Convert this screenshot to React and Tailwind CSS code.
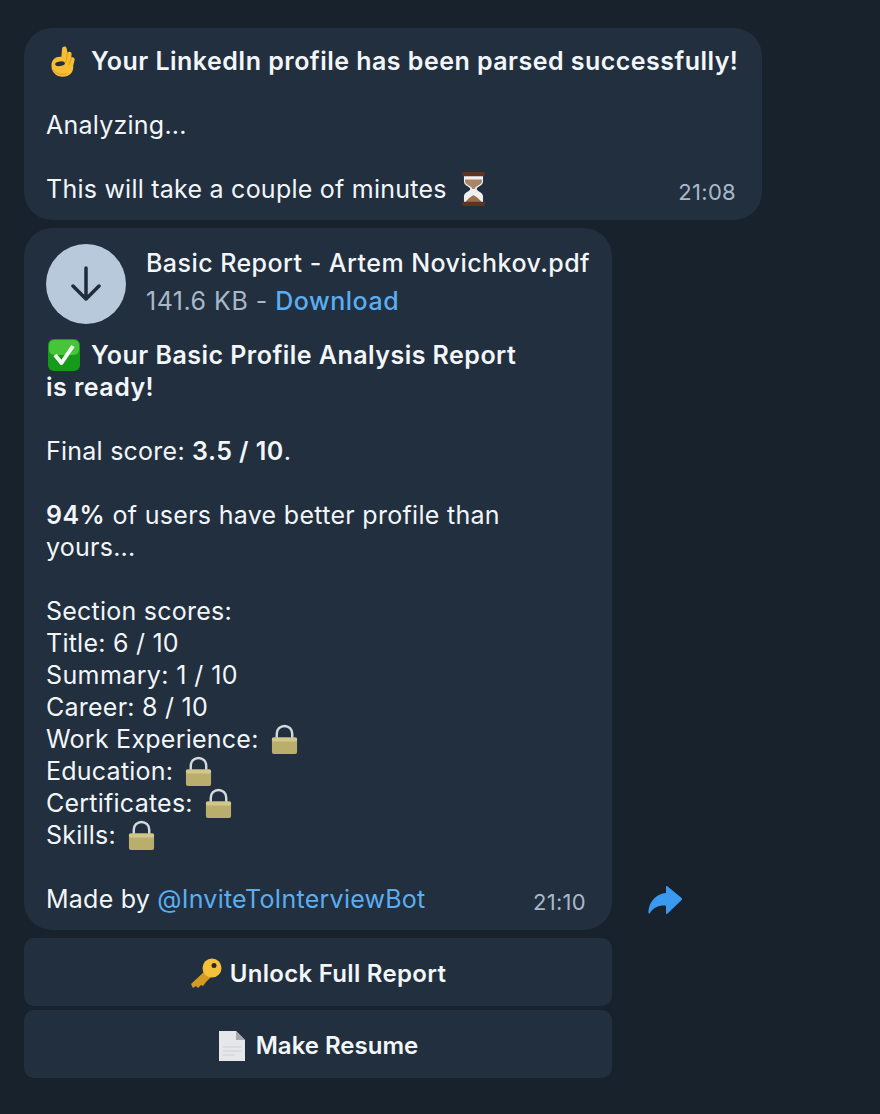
import React from "react";

const Ok = () => (
    <svg viewBox="0 0 84 100" className="w-[28px] h-[33px] ml-1 shrink-0">
        <path d="M4 62C4 44 18 34 34 36l2-24C37 3 48 2 50 10l3 14c2-6 12-5 12 3l-1 11c4-3 12 0 10 8l-4 16c2 22-12 34-32 34C18 96 4 82 4 62z" fill="#f7bd33" />
        <path d="M52 26l-4 26M65 38l-8 22" stroke="#d9921a" strokeWidth="2.500" fill="none" strokeLinecap="round" />
        <ellipse cx="30" cy="57" rx="15" ry="7" transform="rotate(-8 30 57)" fill="#26313c" />
        <path d="M10 76c8 12 26 16 42 10" stroke="#e09a1e" strokeWidth="3" fill="none" />
    </svg>
);

const Hourglass = () => (
    <svg viewBox="0 0 24 34" className="w-[27px] h-[36px] shrink-0">
        <path d="M3 3h18v7c0 4-6 5-6 7s6 3 6 7v7H3v-7c0-4 6-5 6-7s-6-3-6-7z" fill="#eef0f2" />
        <path d="M4 8h16v2c0 3-6 4-7 7h-2c-1-3-7-4-7-7z" fill="#a98465" />
        <path d="M4 31c0-3 6-7 8-8 2 1 8 5 8 8z" fill="#9a6f49" />
        <rect x="1" y="1" width="22" height="4" rx="2" fill="#5a3524" />
        <rect x="1" y="29" width="22" height="4" rx="2" fill="#5a3524" />
    </svg>
);

const Check = () => (
    <svg viewBox="0 0 34 34" className="w-[34px] h-[34px] ml-[1px] shrink-0">
        <rect x="1" y="1" width="32" height="32" rx="6" fill="#159a1a" />
        <rect x="2" y="2" width="30" height="15" rx="5" fill="#46c43a" />
        <path d="M8 17l6.500 8L26 8" stroke="#f4f7f4" strokeWidth="4" fill="none" strokeLinejoin="round" />
    </svg>
);

const Lock = () => (
    <svg viewBox="0 0 30 32" className="w-[29px] h-[31px] shrink-0">
        <path d="M7 15V10c0-4.500 3.500-8 8-8s8 3.500 8 8v5" stroke="#d5d9de" strokeWidth="2.500" fill="none" />
        <rect x="2" y="14" width="26" height="17" rx="2" fill="#b9ae6c" />
        <rect x="2" y="14" width="26" height="4" rx="1.500" fill="#d2c78a" />
    </svg>
);

const Key = () => (
    <svg viewBox="0 0 32 32" className="w-[32px] h-[32px] shrink-0">
        <path d="M16 12L1 26l2 4 3-2 2 2 3-3 2 1 3-4 6-6z" fill="#d69a22" />
        <circle cx="22" cy="10" r="9.500" fill="#f5c03a" />
        <circle cx="24" cy="7.500" r="2.500" fill="#2b2a22" />
    </svg>
);

const Page = () => (
    <svg viewBox="0 0 28 32" className="w-[28px] h-[32px] shrink-0">
        <path d="M1 1h17l9 9v21H1z" fill="#e6e7e9" />
        <path d="M18 1l9 9h-9z" fill="#a7a9ac" />
        <path d="M5 17h18M5 21h18M5 25h12" stroke="#d6d8da" strokeWidth="1.500" />
    </svg>
);

const ReportLine = ({ children }) => <p className="flex items-center gap-[11px] h-8">{children}</p>;

const App = () => {
    return (
        <div className="w-[880px] h-[1114px] bg-[#18222c] pt-7 px-6 text-[25px] leading-8 tracking-[0.24px] text-[#f3f6f9] font-['Inter','Liberation_Sans',sans-serif] overflow-hidden">
            {/* First message */}
            <div className="w-[738px] h-[192px] rounded-[28px] bg-[#212f3f] pl-[22px] pr-[26px] pt-[17px]">
                <p className="flex items-center gap-[13px] h-8 whitespace-nowrap font-semibold tracking-[0.47px]">
                    <Ok />
                    Your LinkedIn profile has been parsed successfully!
                </p>
                <p className="mt-8">Analyzing...</p>
                <div className="mt-8 flex items-center justify-between h-8">
                    <p className="flex items-center gap-[13px]">
                        This will take a couple of minutes
                        <Hourglass />
                    </p>
                    <span className="text-[22px] tracking-[0.3px] text-[#a9b8c8] translate-y-[3px]">21:08</span>
                </div>
            </div>

            {/* Report message */}
            <div className="mt-2 flex items-end">
                <div className="w-[588px] h-[702px] rounded-[28px] bg-[#212f3f] pl-[22px] pr-[26px] pt-4">
                    <div className="flex items-center gap-5">
                        <div className="w-20 h-20 shrink-0 rounded-full bg-[#b8c9dc] flex items-center justify-center">
                            <svg viewBox="0 0 30 36" className="w-[30px] h-9" fill="none" stroke="#1e2c3c" strokeWidth="3.500" strokeLinecap="round" strokeLinejoin="round">
                                <path d="M15 2v31M2 20l13 13 13-13" />
                            </svg>
                        </div>
                        <div className="flex flex-col gap-[6px] mb-1">
                            <p className="whitespace-nowrap font-medium tracking-[0.45px]">Basic Report - Artem Novichkov.pdf</p>
                            <p className="whitespace-nowrap tracking-[0.5px] text-[#a9b8c8]">
                                141.6 KB - <span className="text-[#5aaef0] font-medium">Download</span>
                            </p>
                        </div>
                    </div>

                    <div className="mt-[15px]">
                        <p className="flex items-center gap-[10px] h-8 font-semibold tracking-[0.47px]">
                            <Check />
                            Your Basic Profile Analysis Report
                        </p>
                        <p className="font-semibold tracking-[0.47px]">is ready!</p>
                        <p className="mt-8">
                            Final score: <span className="font-semibold tracking-[0.47px]">3.5 / 10</span>.
                        </p>
                        <p className="mt-8 tracking-[0.3px]">
                            <span className="font-semibold tracking-[0.47px]">94%</span> of users have better profile than
                        </p>
                        <p>yours...</p>
                        <p className="mt-8">Section scores:</p>
                        <p>Title: 6 / 10</p>
                        <p className="tracking-[0.4px]">Summary: 1 / 10</p>
                        <p>Career: 8 / 10</p>
                        <ReportLine>Work Experience: <Lock /></ReportLine>
                        <ReportLine>Education: <Lock /></ReportLine>
                        <ReportLine>Certificates: <Lock /></ReportLine>
                        <ReportLine>Skills: <Lock /></ReportLine>
                        <div className="mt-8 flex items-center justify-between h-8">
                            <p>
                                Made by <span className="text-[#5aaef0]">@InviteToInterviewBot</span>
                            </p>
                            <span className="text-[22px] tracking-[0.3px] text-[#a9b8c8] translate-y-[3px]">21:10</span>
                        </div>
                    </div>
                </div>

                {/* Forward arrow */}
                <svg viewBox="0 0 105 90" className="w-[35px] h-[30px] ml-9 mb-[15px]">
                    <path d="M58 4l43 35q3 3 0 6L58 86q-4 3-4-2V62C34 60 18 66 6 84q-4 4-5-2C3 48 26 26 54 24V6q0-5 4-2z" fill="#3a9af0" />
                </svg>
            </div>

            {/* Inline buttons */}
            <div className="w-[588px] mt-2 flex flex-col gap-1 font-semibold text-[24px]">
                <button className="h-[68px] rounded-[10px] bg-[#212f3f] tracking-[0.3px] flex items-center justify-center gap-2 pt-1">
                    <Key />
                    Unlock Full Report
                </button>
                <button className="h-[68px] rounded-[10px] bg-[#212f3f] tracking-normal flex items-center justify-center gap-[10px] pt-1">
                    <Page />
                    Make Resume
                </button>
            </div>
        </div>
    );
};

export default App;
